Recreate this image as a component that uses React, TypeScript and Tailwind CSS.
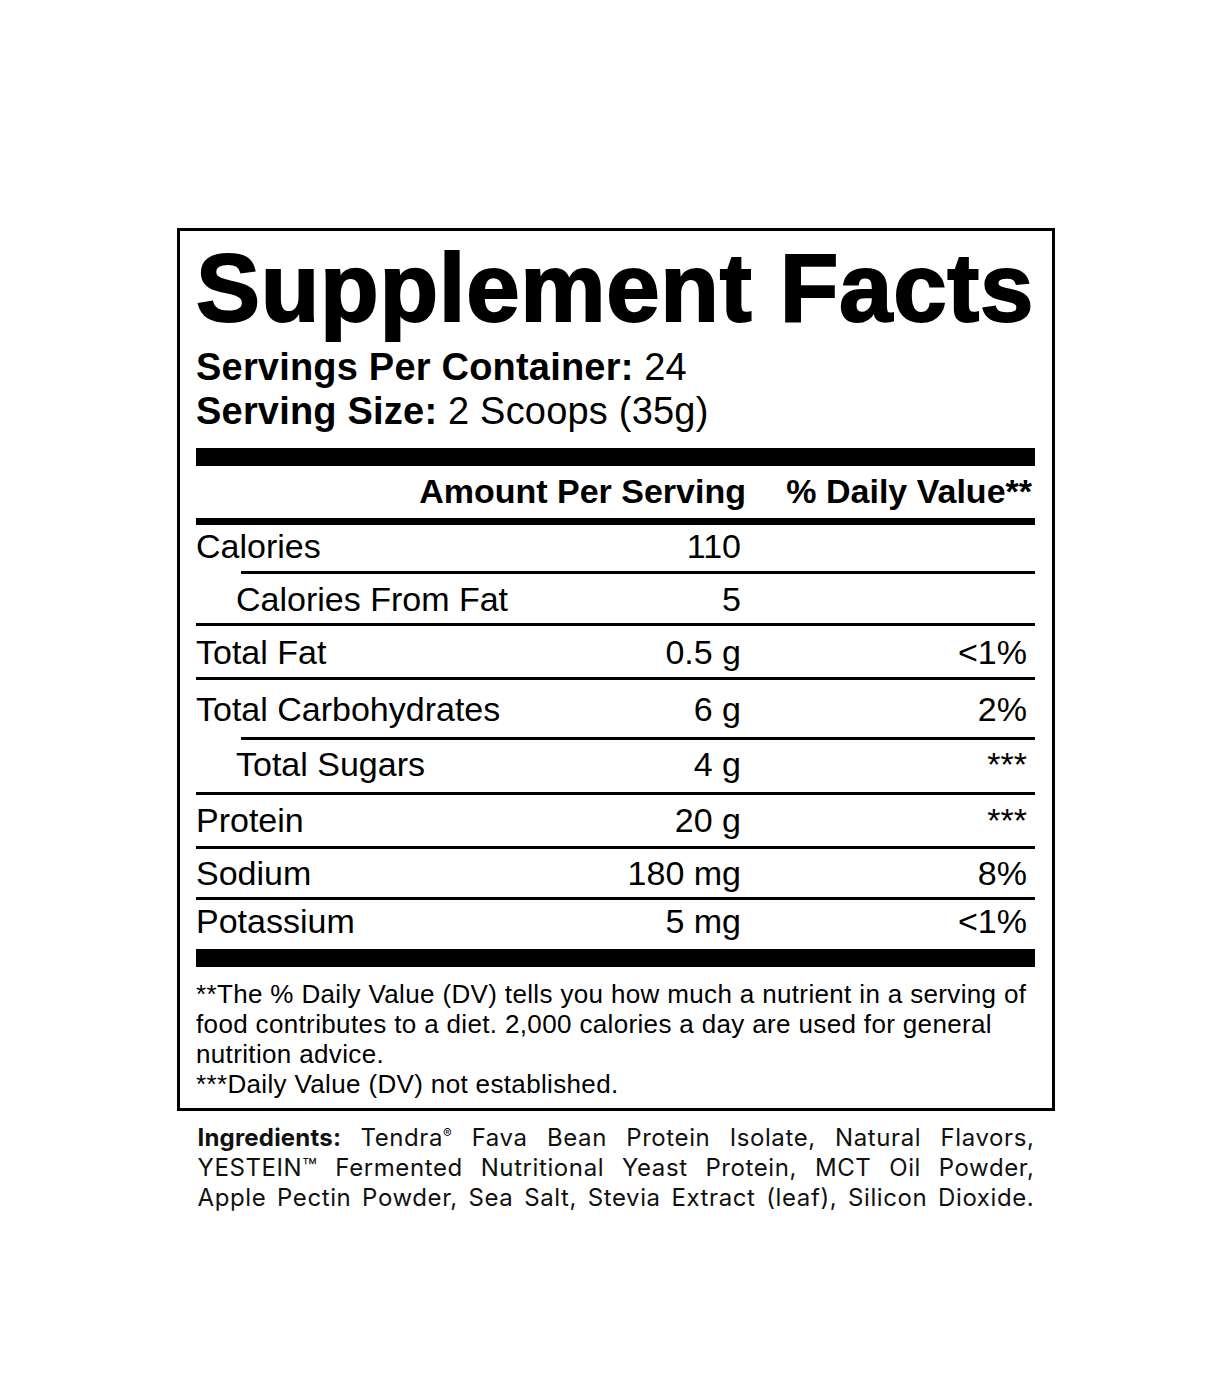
import type { ReactNode } from "react"

const rows = [
  { label: "Calories", amount: "110", dv: "", h: "h-[46px]", pt: "pt-[5px]", indent: false, lineIndent: false },
  { label: "Calories From Fat", amount: "5", dv: "", h: "h-[49px]", pt: "pt-[9px]", indent: true, lineIndent: true },
  { label: "Total Fat", amount: "0.5 g", dv: "<1%", h: "h-[51px]", pt: "pt-[10px]", indent: false, lineIndent: false },
  { label: "Total Carbohydrates", amount: "6 g", dv: "2%", h: "h-[57px]", pt: "pt-[13px]", indent: false, lineIndent: false },
  { label: "Total Sugars", amount: "4 g", dv: "***", h: "h-[52px]", pt: "pt-[8px]", indent: true, lineIndent: true },
  { label: "Protein", amount: "20 g", dv: "***", h: "h-[51px]", pt: "pt-[9px]", indent: false, lineIndent: false },
  { label: "Sodium", amount: "180 mg", dv: "8%", h: "h-[48px]", pt: "pt-[8px]", indent: false, lineIndent: false },
  { label: "Potassium", amount: "5 mg", dv: "<1%", h: "h-[49px]", pt: "pt-[5px]", indent: false, lineIndent: false },
]

// justified line: words spread edge to edge
const Line = ({ words }: { words: ReactNode[] }) => (
  <div className="flex justify-between whitespace-nowrap">
    {words.map((w, i) => (
      <span key={i}>{w}</span>
    ))}
  </div>
)

const App = () => {
  return (
    <div className="min-h-[1384px] bg-white pt-[228px] text-black font-['Liberation_Sans',Arial,sans-serif]">
      {/* Label box */}
      <div className="mx-auto w-[878px] border-[3px] border-black pl-[16px] pr-[17px] pt-[9px] pb-[9px]">
        <h1 className="text-[96px] leading-[96px] font-bold whitespace-nowrap tracking-[0.7px] [-webkit-text-stroke:2px_#000]">
          Supplement Facts
        </h1>
        <div className="mt-[9px] text-[38px] leading-[44px] tracking-[0.2px]">
          <div>
            <span className="font-bold">Servings Per Container:</span> 24
          </div>
          <div>
            <span className="font-bold">Serving Size:</span> 2 Scoops (35g)
          </div>
        </div>
        <div className="mt-[15px] h-[18px] bg-black" />

        {/* Header */}
        <div className="flex h-[52px] pt-[8px] text-[34px] leading-[34px] font-bold">
          <div className="w-[550px] text-right">Amount Per Serving</div>
          <div className="flex-1 text-right pr-[3px]">% Daily Value**</div>
        </div>
        <div className="h-[7px] bg-black" />

        {/* Rows */}
        {rows.map((r, i) => (
          <div key={r.label}>
            {i > 0 && <div className={`h-[3px] bg-black ${r.lineIndent ? "ml-[45px]" : ""}`} />}
            <div className={`flex text-[34px] leading-[33px] ${r.h} ${r.pt}`}>
              <div className="w-[545px] flex justify-between">
                <span className={r.indent ? "pl-[40px]" : ""}>{r.label}</span>
                <span>{r.amount}</span>
              </div>
              <div className="flex-1 text-right pr-[8px]">{r.dv}</div>
            </div>
          </div>
        ))}
        <div className="h-[18px] bg-black" />

        {/* Footnotes */}
        <div className="mt-[12px] text-[26px] leading-[30px] tracking-[0.35px] whitespace-nowrap">
          <div>**The % Daily Value (DV) tells you how much a nutrient in a serving of</div>
          <div>food contributes to a diet. 2,000 calories a day are used for general</div>
          <div>nutrition advice.</div>
          <div>***Daily Value (DV) not established.</div>
        </div>
      </div>

      {/* Ingredients */}
      <div className="mx-auto mt-[12px] w-[837px] text-[24px] leading-[30px] tracking-[0.6px] text-[#111] font-['Inter',sans-serif]">
        <Line
          words={[
            <span className="font-bold tracking-[0.2px]">Ingredients:</span>,
            <>
              Tendra<span className="text-[13px] align-top leading-[20px]">®</span>
            </>,
            "Fava",
            "Bean",
            "Protein",
            "Isolate,",
            "Natural",
            "Flavors,",
          ]}
        />
        <Line words={["YESTEIN™", "Fermented", "Nutritional", "Yeast", "Protein,", "MCT", "Oil", "Powder,"]} />
        <Line
          words={["Apple", "Pectin", "Powder,", "Sea", "Salt,", "Stevia", "Extract", "(leaf),", "Silicon", "Dioxide."]}
        />
      </div>
    </div>
  )
}

export default App
